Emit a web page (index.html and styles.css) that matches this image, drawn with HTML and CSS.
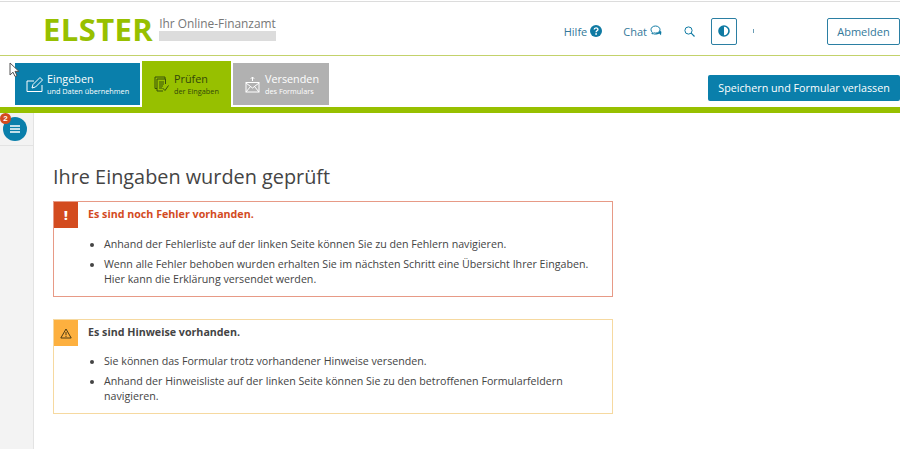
FILE: index.html
```html
<!DOCTYPE html>
<html lang="de">
<head>
    <meta charset="UTF-8" />
    <title>ELSTER - Ihre Eingaben wurden geprüft</title>
    <link rel="stylesheet" href="styles.css">
</head>
<body>
    <header class="top">
        <div class="brand">
            <span class="logo">ELSTER</span>
            <div class="claim">
                <span class="claim-text">Ihr Online-Finanzamt</span>
                <span class="claim-bar"></span>
            </div>
        </div>
        <nav class="tools">
            <a class="tool tool-help">Hilfe
                <svg width="12" height="12" viewBox="0 0 12 12"><circle cx="6" cy="6" r="6" fill="#0f7aa3"/><path d="M4.2 4.6c0-2.3 3.7-2.3 3.7-.2 0 1.400-1.800 1.400-1.800 2.800" fill="none" stroke="#fff" stroke-width="1.400"/><rect x="5.300" y="8.200" width="1.600" height="1.600" fill="#fff"/></svg>
            </a>
            <a class="tool tool-chat">Chat
                <svg width="12" height="12" viewBox="0 0 12 12"><path d="M5.500 1C2.800 1 1 2.600 1 4.700c0 1.100.5 2 1.300 2.600L2 9l2-1.100c.5.100 1 .2 1.500.2 2.700 0 4.500-1.500 4.500-3.400S8.200 1 5.500 1z" fill="none" stroke="#0f7aa3" stroke-width="1"/><path d="M3 9.300c1.500.5 5 .4 6.200-.8l1.800 1.700.4-3.500-1.400-1C9.500 7.500 6 8.500 3 9.300z" fill="#0f7aa3"/></svg>
            </a>
            <a class="tool tool-search">
                <svg width="11" height="11" viewBox="0 0 11 11"><circle cx="4.500" cy="4.500" r="3.600" fill="none" stroke="#0f7aa3" stroke-width="1"/><path d="M7.200 7.200L10.500 10.500" stroke="#0f7aa3" stroke-width="1.200"/></svg>
            </a>
            <button class="contrast">
                <svg width="12" height="12" viewBox="0 0 12 12"><circle cx="6" cy="6" r="5" fill="none" stroke="#0f7aa3" stroke-width="1.600"/><path d="M6 1a5 5 0 0 0 0 10z" fill="#0f7aa3"/></svg>
            </button>
            <span class="tick"></span>
            <button class="logout">Abmelden</button>
        </nav>
    </header>

    <div class="steps-row">
        <div class="steps">
            <a class="step step-blue">
                <svg class="step-icon" width="18" height="17" viewBox="0 0 18 17"><path d="M8 5H1v10.500h15V9" fill="none" stroke="#fff" stroke-width="1"/><path d="M6 12l1-3.500L14 1.500l2.500 2.500-7 7z" fill="none" stroke="#fff" stroke-width="1"/></svg>
                <span class="step-text"><b>Eingeben</b><small>und Daten übernehmen</small></span>
            </a>
            <a class="step step-green">
                <svg class="step-icon" width="15" height="16" viewBox="0 0 15 16"><path d="M11 3V1H1v11.500h2M3 3h8.500v5M3 3v12h6" fill="none" stroke="#37500a" stroke-width="1"/><path d="M5 6h5M5 8h5M5 10h4M5 12h3" stroke="#37500a" stroke-width="1"/><path d="M8.500 12l2.500 2.500 3.500-5" fill="none" stroke="#37500a" stroke-width="1"/></svg>
                <span class="step-text"><b>Prüfen</b><small>der Eingaben</small></span>
            </a>
            <a class="step step-grey">
                <svg class="step-icon" width="15" height="17" viewBox="0 0 15 17"><rect x="1" y="6.500" width="13" height="9.500" fill="none" stroke="#fff" stroke-width="1"/><path d="M1 7l6.500 5L14 7M1 16l4.500-5.500M14 16l-4.500-5.500M7.500 5V1M5.800 2.800L7.500 1l1.700 1.800" fill="none" stroke="#fff" stroke-width="1"/></svg>
                <span class="step-text"><b>Versenden</b><small>des Formulars</small></span>
            </a>
        </div>
        <button class="save">Speichern und Formular verlassen</button>
    </div>
    <div class="green-bar"></div>

    <div class="page">
        <aside class="side">
            <div class="side-head">
                <button class="menu">
                    <span class="badge">2</span>
                    <svg width="10" height="8" viewBox="0 0 10 8"><path d="M0 1h10M0 4h10M0 7h10" stroke="#fff" stroke-width="1.500"/></svg>
                </button>
            </div>
        </aside>
        <main class="content">
            <h1>Ihre Eingaben wurden geprüft</h1>

            <section class="box box-error">
                <div class="box-head">
                    <span class="box-icon">!</span>
                    <strong>Es sind noch Fehler vorhanden.</strong>
                </div>
                <ul>
                    <li>Anhand der Fehlerliste auf der linken Seite können Sie zu den Fehlern navigieren.</li>
                    <li>Wenn alle Fehler behoben wurden erhalten Sie im nächsten Schritt eine Übersicht Ihrer Eingaben. Hier kann die Erklärung versendet werden.</li>
                </ul>
            </section>

            <section class="box box-warn">
                <div class="box-head">
                    <span class="box-icon">
                        <svg width="12" height="11" viewBox="0 0 12 11"><path d="M6 1L11.200 10H.8z" fill="none" stroke="#4a3a14" stroke-width="1"/><path d="M6 4v3.200M6 7.900v1" stroke="#4a3a14" stroke-width="1"/></svg>
                    </span>
                    <strong>Es sind Hinweise vorhanden.</strong>
                </div>
                <ul>
                    <li>Sie können das Formular trotz vorhandener Hinweise versenden.</li>
                    <li>Anhand der Hinweisliste auf der linken Seite können Sie zu den betroffenen Formularfeldern navigieren.</li>
                </ul>
            </section>
        </main>
    </div>

    <svg class="cursor" width="12" height="16" viewBox="0 0 12 16"><path d="M1 1v12l3-2.800 2 4.300 2-.9-2-4.200h4z" fill="#fff" stroke="#555" stroke-width="1"/></svg>
</body>
</html>
```

FILE: styles.css
```css
html {
    box-sizing: border-box;
}

*, *:before, *:after {
    box-sizing: inherit;
}

body {
    margin: 0;
    height: 449px;
    overflow: hidden;
    background: #fff;
    color: #444;
    font-family: "Open Sans", "Noto Sans", sans-serif;
    font-size: 11px;
}

.top {
    display: flex;
    justify-content: space-between;
    align-items: center;
    height: 55px;
    margin-top: 1px;
    padding: 0 0 0 43px;
    border-top: 1px solid #dcdcdc;
    border-bottom: 1px solid #c3d26b;
}

.brand {
    display: flex;
    align-items: flex-start;
    gap: 6px;
}

.logo {
    color: #97c000;
    font-size: 31px;
    font-weight: 700;
    line-height: 30px;
    letter-spacing: .4px;
}

.claim {
    display: flex;
    flex-direction: column;
    padding-top: 2px;
}

.claim-text {
    color: #777;
    font-size: 11.900px;
    line-height: 15px;
    white-space: nowrap;
}

.claim-bar {
    height: 10px;
    background: #dcdcdc;
}

.tools {
    display: flex;
    align-items: center;
    padding-top: 5px;
    color: #33789a;
}

.tool {
    display: flex;
    align-items: center;
    gap: 3px;
}

.tool-help {
    margin-right: 21px;
}

.tool-chat {
    margin-right: 22px;
}

.tool-search {
    margin-right: 16px;
}

.contrast {
    display: flex;
    align-items: center;
    justify-content: center;
    width: 26px;
    height: 27px;
    padding: 0;
    border: 1px solid #2b7fa3;
    border-radius: 2px;
    background: #fff;
}

.tick {
    width: 1px;
    height: 4px;
    margin: 0 73px 0 16px;
    background: #6a9db5;
}

.logout {
    width: 73px;
    height: 27px;
    padding: 0;
    border: 1px solid #2b7fa3;
    border-radius: 2px;
    background: #fff;
    color: #33789a;
    font: inherit;
}

.steps-row {
    display: flex;
    justify-content: space-between;
    align-items: flex-end;
    height: 51px;
    padding-left: 15px;
}

.steps {
    display: flex;
    align-items: flex-end;
    gap: 2px;
}

.step {
    display: flex;
    align-items: center;
    height: 42px;
    margin-bottom: 2px;
    color: #fff;
}

.step-icon {
    flex: none;
}

.step-text {
    display: flex;
    flex-direction: column;
}

.step-text b {
    font-size: 10.800px;
    font-weight: 400;
    line-height: 15px;
}

.step-text small {
    font-size: 7.300px;
    line-height: 11px;
    white-space: nowrap;
}

.step-blue {
    width: 125px;
    padding-left: 11px;
    gap: 3px;
    background: #0a7fab;
}

.step-green {
    width: 89px;
    height: 46px;
    margin-bottom: 0;
    padding-left: 12px;
    gap: 5px;
    background: #97c000;
    color: #33480a;
}

.step-grey {
    width: 96px;
    padding-left: 12px;
    gap: 5px;
    background: #b1b1b1;
}

.save {
    width: 192px;
    height: 26px;
    margin-bottom: 6px;
    padding: 0;
    border: 0;
    border-radius: 2px;
    background: #0a7fab;
    color: #fff;
    font: inherit;
    font-size: 10.750px;
}

.green-bar {
    height: 6px;
    background: #97c000;
}

.page {
    display: flex;
    height: 336px;
}

.side {
    flex: none;
    width: 34px;
    background: #f3f3f3;
    border-right: 1px solid #e3e3e3;
}

.side-head {
    height: 33px;
    padding: 4px 3px;
    border-bottom: 1px solid #e3e3e3;
}

.menu {
    position: relative;
    display: flex;
    align-items: center;
    justify-content: center;
    width: 24px;
    height: 24px;
    padding: 0;
    border: 0;
    border-radius: 50%;
    background: #0a7fab;
}

.badge {
    position: absolute;
    top: -4px;
    left: -3px;
    width: 11px;
    height: 11px;
    border-radius: 50%;
    background: #d34b1f;
    color: #fff;
    font-size: 8px;
    font-weight: 700;
    line-height: 11px;
    text-align: center;
}

.content {
    width: 579px;
    padding: 50px 0 0 19px;
}

h1 {
    margin: 0 0 10px;
    color: #444;
    font-size: 19.850px;
    font-weight: 400;
    line-height: 28px;
}

.box {
    margin-bottom: 22px;
    border: 1px solid;
}

.box-head {
    display: flex;
    align-items: flex-start;
    gap: 10px;
}

.box-icon {
    display: flex;
    align-items: center;
    justify-content: center;
    width: 24px;
    height: 26px;
    font-size: 13px;
    font-weight: 800;
}

.box-head strong {
    font-size: 10.700px;
    font-weight: 700;
    line-height: 24px;
}

.box ul {
    margin: 0;
    padding: 9px 10px 0 50px;
}

.box li {
    margin-bottom: 5px;
    font-size: 10.660px;
    line-height: 15px;
}

.box-error {
    height: 96px;
    border-color: #e79a86;
}

.box-error .box-icon {
    background: #d34b1f;
    color: #fff;
}

.box-error strong {
    color: #d34b1f;
}

.box-warn {
    height: 95px;
    border-color: #f6d9a0;
}

.box-warn .box-icon {
    background: #fdb03f;
}

.box-warn ul {
    padding-top: 8px;
}

.cursor {
    position: absolute;
    top: 62px;
    left: 9px;
}
```
